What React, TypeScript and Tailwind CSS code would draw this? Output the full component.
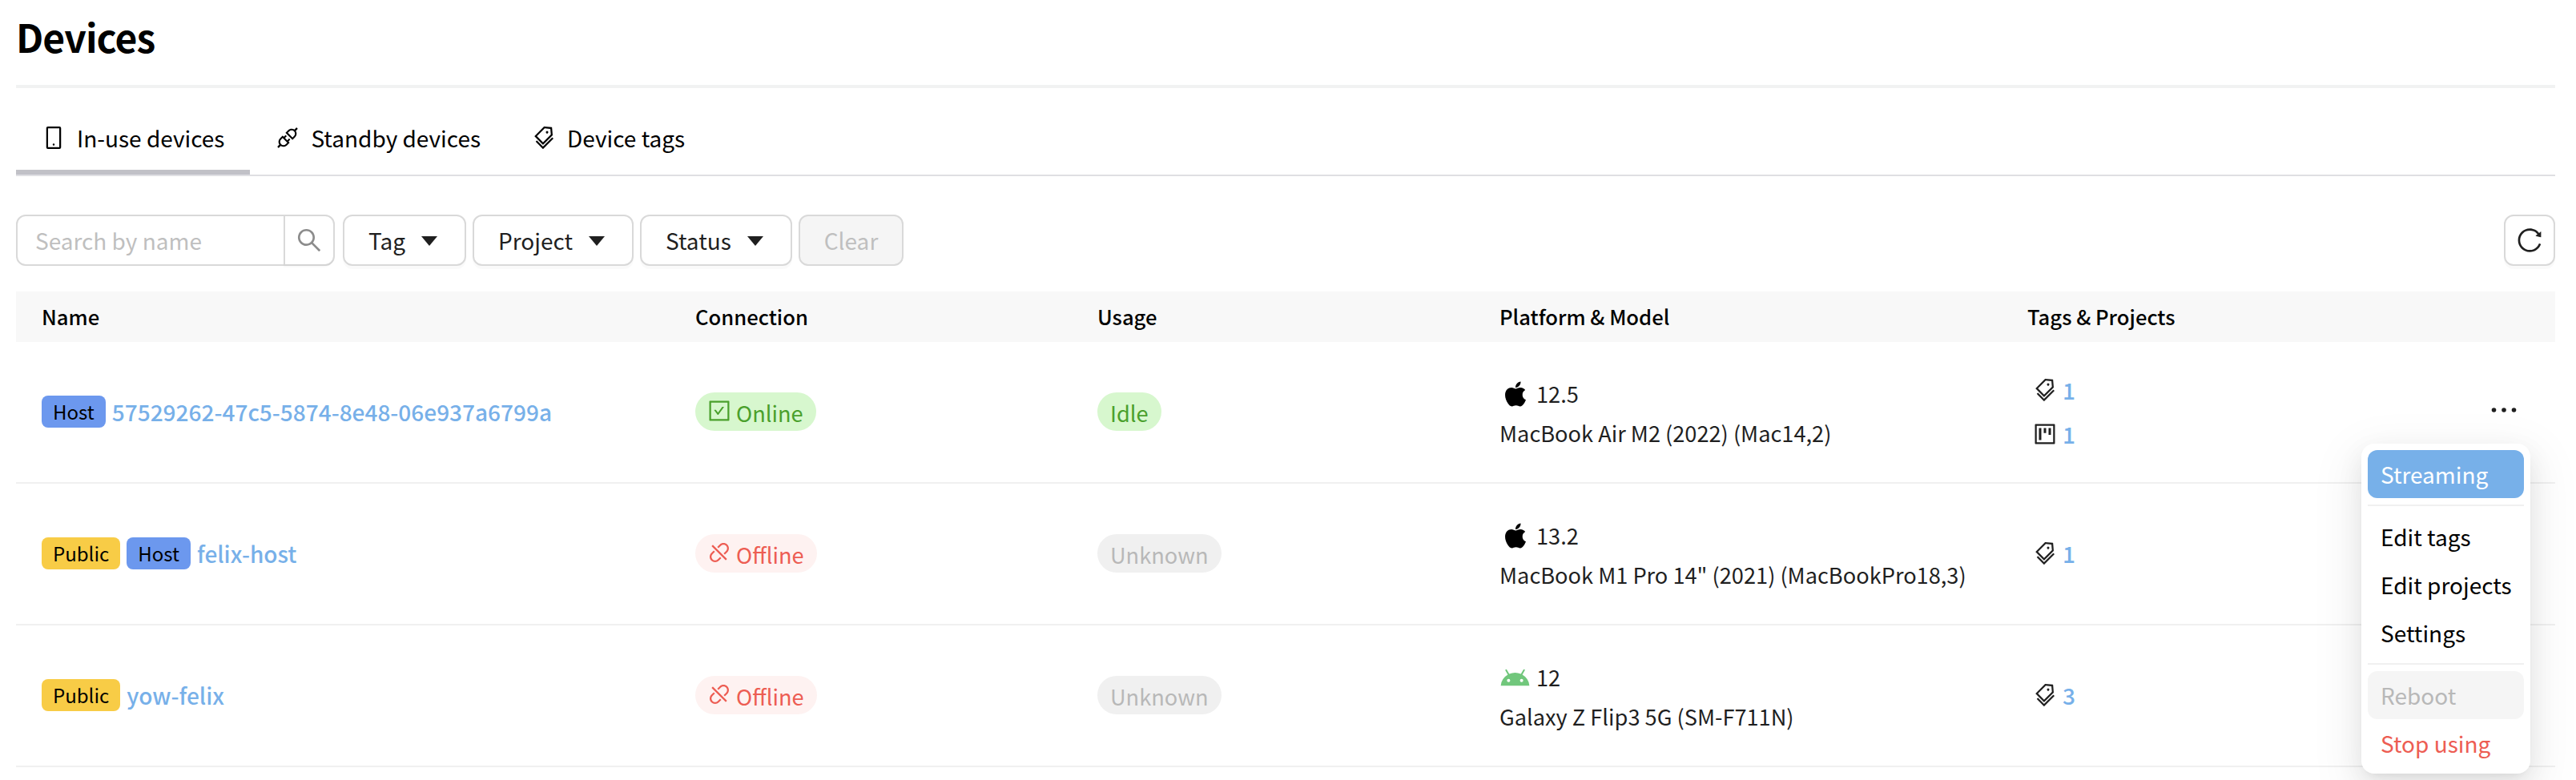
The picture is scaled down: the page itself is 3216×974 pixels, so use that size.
import React from "react";
import {
  AiFillApple,
  AiOutlineApi,
  AiOutlineCheckSquare,
  AiOutlineDisconnect,
  AiOutlineMobile,
  AiOutlineProject,
  AiOutlineReload,
  AiOutlineSearch,
  AiOutlineTags,
} from "react-icons/ai";
import { MdAndroid } from "react-icons/md";

type Device = {
  name: string;
  isPublic: boolean;
  isHost: boolean;
  online: boolean;
  usage: string;
  platform: "mac" | "android";
  version: string;
  model: string;
  tags: number;
  projects: number;
};

const devices: Device[] = [
  { name: "57529262-47c5-5874-8e48-06e937a6799a", isPublic: false, isHost: true, online: true, usage: "Idle", platform: "mac", version: "12.5", model: "MacBook Air M2 (2022) (Mac14,2)", tags: 1, projects: 1 },
  { name: "felix-host", isPublic: true, isHost: true, online: false, usage: "Unknown", platform: "mac", version: "13.2", model: 'MacBook M1 Pro 14" (2021) (MacBookPro18,3)', tags: 1, projects: 0 },
  { name: "yow-felix", isPublic: true, isHost: false, online: false, usage: "Unknown", platform: "android", version: "12", model: "Galaxy Z Flip3 5G (SM-F711N)", tags: 3, projects: 0 },
];

const columns = "grid grid-cols-[816px_502px_502px_659px_1fr]";

function Tab({ icon, label, active }: { icon: React.ReactNode; label: string; active?: boolean }) {
  return (
    <div className={`flex h-[108px] items-center gap-[13px] border-b-[6px] pr-8 pl-[31px] pt-[22px] ${active ? "border-[#c1c1c7]" : "border-transparent"}`}>
      {icon}
      <span>{label}</span>
    </div>
  );
}

function FilterButton({ label, width }: { label: string; width: string }) {
  return (
    <button className={`flex h-16 items-center justify-between rounded-xl border-2 border-[#d9d9d9] bg-white pr-[34px] pl-[30px] text-[#1f1f1f] shadow-[0_4px_0_rgba(0,0,0,0.02)] ${width}`}>
      <span>{label}</span>
      <svg width="20" height="12" viewBox="0 0 20 12" fill="currentColor" className="translate-y-px">
        <path d="M0 0h20L10 12z" />
      </svg>
    </button>
  );
}

function Badge({ label, color }: { label: string; color: string }) {
  return <span className={`flex h-10 items-center rounded-lg px-[14px] text-[24px] text-black ${color}`}>{label}</span>;
}

function Row({ device }: { device: Device }) {
  return (
    <div className={`${columns} h-[177px] items-center border-b-2 border-[#f0f0f0] pb-px`}>
      <div className="flex items-center gap-2 pl-8">
        {device.isPublic && <Badge label="Public" color="bg-[#f8cc46]" />}
        {device.isHost && <Badge label="Host" color="bg-[#6c98ee]" />}
        <a className="font-medium text-[#77b0e9]">{device.name}</a>
      </div>
      <div className="flex pl-8">
        <span className={`flex h-12 items-center gap-[5px] rounded-3xl pr-4 pl-[14px] text-[27.2px] ${device.online ? "bg-[#d7f7ce] text-[#4aa02c]" : "bg-[#fef2f1] text-[#ed5d53]"}`}>
          {device.online ? <AiOutlineCheckSquare size={32} className="-translate-y-px" /> : <AiOutlineDisconnect size={32} className="-translate-y-px" />}
          <span className="pt-[2px]">{device.online ? "Online" : "Offline"}</span>
        </span>
      </div>
      <div className="flex pl-8">
        <span className={`flex h-12 items-center rounded-3xl px-4 pt-[2px] text-[27.2px] ${device.online ? "bg-[#d7f7ce] text-[#4aa02c]" : "bg-[#f0f0f0] text-[#b8b8b8]"}`}>{device.usage}</span>
      </div>
      <div className="pt-1 pl-8 text-[27.2px] text-[#1f1f1f]">
        <div className="flex h-[49px] items-center gap-[7px]">
          <span className="flex w-[39px] shrink-0 justify-center">
            {device.platform === "mac" ? (
              <AiFillApple size={38} className="text-black" />
            ) : (
              <MdAndroid size={39} className="shrink-0 translate-y-px text-[#71c77c]" />
            )}
          </span>
          <span>{device.version}</span>
        </div>
        <div className="flex h-[49px] items-center whitespace-nowrap">{device.model}</div>
      </div>
      <div className="flex items-center justify-between pr-12 pl-[38px]">
        <div>
          <div className="flex h-[55px] items-center gap-[6px] text-[#1f1f1f]">
            <AiOutlineTags size={32} />
            <a className="font-medium text-[#77b0e9]">{device.tags}</a>
          </div>
          {device.projects > 0 && (
            <div className="flex h-[55px] items-center gap-[6px] text-[#1f1f1f]">
              <AiOutlineProject size={32} />
              <a className="font-medium text-[#77b0e9]">{device.projects}</a>
            </div>
          )}
        </div>
        <svg width="32" height="8" viewBox="0 0 32 8" fill="#1f1f1f" className="-translate-y-[2px]">
          <circle cx="3.5" cy="4" r="2.8" />
          <circle cx="16" cy="4" r="2.8" />
          <circle cx="28.5" cy="4" r="2.8" />
        </svg>
      </div>
    </div>
  );
}

function MenuItem({ label, look }: { label: string; look: string }) {
  return <div className={`flex h-[60px] items-center rounded-xl px-4 ${look}`}>{label}</div>;
}

function ActionMenu() {
  return (
    <div className="absolute top-[554px] left-[2948px] w-[211px] rounded-2xl bg-white p-2 text-black shadow-[0_12px_32px_0_rgba(0,0,0,0.08),0_6px_12px_-8px_rgba(0,0,0,0.12),0_18px_56px_16px_rgba(0,0,0,0.05)]">
      <MenuItem label="Streaming" look="bg-[#77b0e9] text-white" />
      <div className="my-2 h-0.5 bg-[#f0f0f0]" />
      <MenuItem label="Edit tags" look="" />
      <MenuItem label="Edit projects" look="whitespace-nowrap" />
      <MenuItem label="Settings" look="" />
      <div className="my-2 h-0.5 bg-[#f0f0f0]" />
      <MenuItem label="Reboot" look="bg-[#f5f5f5] text-[#b8b8b8]" />
      <MenuItem label="Stop using" look="text-[#ed5d53]" />
    </div>
  );
}

export default function App() {
  return (
    <div className="relative h-[974px] w-[3216px] overflow-hidden bg-white pr-[26px] pl-5 font-['Noto_Sans_CJK_KR','Noto_Sans',sans-serif] text-[28px] leading-[1.5] text-black">
      <header className="flex h-[110px] items-start border-b-4 border-[#f1f2f2] pt-[9px]">
        <h1 className="text-[48px] leading-[72px] font-bold tracking-[-0.9px]">Devices</h1>
      </header>

      <nav className="flex h-[110px] border-b-2 border-[#dfdfe3]">
        <Tab active icon={<AiOutlineMobile size={32} />} label="In-use devices" />
        <Tab icon={<AiOutlineApi size={32} />} label="Standby devices" />
        <Tab icon={<AiOutlineTags size={32} />} label="Device tags" />
      </nav>

      <div className="mt-12 flex h-16 items-center gap-2">
        <div className="mr-0.5 flex h-16 w-[398px] rounded-xl border-2 border-[#d9d9d9]">
          <div className="flex flex-1 items-center pl-[22px] text-[#bfbfbf]">Search by name</div>
          <div className="flex w-[62px] items-center justify-center rounded-r-xl border-l-2 border-[#d9d9d9] text-[#8c8c8c] shadow-[0_4px_0_rgba(0,0,0,0.02)]">
            <AiOutlineSearch size={36} />
          </div>
        </div>
        <FilterButton label="Tag" width="w-[154px]" />
        <FilterButton label="Project" width="w-[201px]" />
        <FilterButton label="Status" width="w-[190px]" />
        <button className="flex h-16 w-[131px] items-center justify-center rounded-xl border-2 border-[#d9d9d9] bg-[#f5f5f5] text-[#bfbfbf]">Clear</button>
        <button className="ml-auto flex size-16 items-center justify-center rounded-xl border-2 border-[#d9d9d9] bg-white text-[#1f1f1f] shadow-[0_4px_0_rgba(0,0,0,0.02)]">
          <AiOutlineReload size={36} />
        </button>
      </div>

      <div className={`${columns} mt-8 h-[63px] items-center bg-[#f8f8f8] text-[25.6px] font-medium`}>
        <div className="pl-8">Name</div>
        <div className="pl-8">Connection</div>
        <div className="pl-8">Usage</div>
        <div className="pl-8">Platform &amp; Model</div>
        <div className="pl-8">Tags &amp; Projects</div>
      </div>
      {devices.map((device) => (
        <Row key={device.name} device={device} />
      ))}

      <ActionMenu />
    </div>
  );
}
